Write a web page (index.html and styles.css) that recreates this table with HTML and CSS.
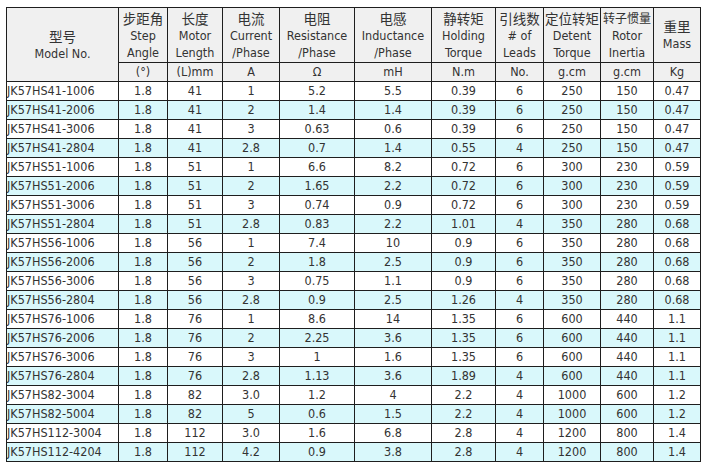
FILE: index.html
```
<!DOCTYPE html>
<html>
<head>
<meta charset="utf-8">
<link rel="stylesheet" href="styles.css">
</head>
<body>
<table class="spec">
<colgroup>
<col class="c-model"><col class="c-step"><col class="c-len"><col class="c-cur"><col class="c-res"><col class="c-ind"><col class="c-hold"><col class="c-leads"><col class="c-det"><col class="c-rot"><col class="c-mass">
</colgroup>
<thead>
<tr class="h1">
<th rowspan="2"><span class="zh">型号</span>Model No.</th>
<th><span class="zh">步距角</span>Step<br>Angle</th>
<th><span class="zh">长度</span>Motor<br>Length</th>
<th><span class="zh">电流</span>Current<br>/Phase</th>
<th><span class="zh">电阻</span>Resistance<br>/Phase</th>
<th><span class="zh">电感</span>Inductance<br>/Phase</th>
<th><span class="zh">静转矩</span>Holding<br>Torque</th>
<th><span class="zh">引线数</span># of<br>Leads</th>
<th><span class="zh">定位转矩</span>Detent<br>Torque</th>
<th><span class="zh narrow">转子惯量</span>Rotor<br>Inertia</th>
<th><span class="zh">重里</span>Mass</th>
</tr>
<tr class="h2">
<th>(°)</th><th>(L)mm</th><th>A</th><th>Ω</th><th>mH</th><th>N.m</th><th>No.</th><th>g.cm</th><th>g.cm</th><th>Kg</th>
</tr>
</thead>
<tbody>
<tr><td class="m">JK57HS41-1006</td><td>1.8</td><td>41</td><td>1</td><td>5.2</td><td>5.5</td><td>0.39</td><td>6</td><td>250</td><td>150</td><td>0.47</td></tr>
<tr class="alt"><td class="m">JK57HS41-2006</td><td>1.8</td><td>41</td><td>2</td><td>1.4</td><td>1.4</td><td>0.39</td><td>6</td><td>250</td><td>150</td><td>0.47</td></tr>
<tr><td class="m">JK57HS41-3006</td><td>1.8</td><td>41</td><td>3</td><td>0.63</td><td>0.6</td><td>0.39</td><td>6</td><td>250</td><td>150</td><td>0.47</td></tr>
<tr class="alt"><td class="m">JK57HS41-2804</td><td>1.8</td><td>41</td><td>2.8</td><td>0.7</td><td>1.4</td><td>0.55</td><td>4</td><td>250</td><td>150</td><td>0.47</td></tr>
<tr><td class="m">JK57HS51-1006</td><td>1.8</td><td>51</td><td>1</td><td>6.6</td><td>8.2</td><td>0.72</td><td>6</td><td>300</td><td>230</td><td>0.59</td></tr>
<tr class="alt"><td class="m">JK57HS51-2006</td><td>1.8</td><td>51</td><td>2</td><td>1.65</td><td>2.2</td><td>0.72</td><td>6</td><td>300</td><td>230</td><td>0.59</td></tr>
<tr><td class="m">JK57HS51-3006</td><td>1.8</td><td>51</td><td>3</td><td>0.74</td><td>0.9</td><td>0.72</td><td>6</td><td>300</td><td>230</td><td>0.59</td></tr>
<tr class="alt"><td class="m">JK57HS51-2804</td><td>1.8</td><td>51</td><td>2.8</td><td>0.83</td><td>2.2</td><td>1.01</td><td>4</td><td>350</td><td>280</td><td>0.68</td></tr>
<tr><td class="m">JK57HS56-1006</td><td>1.8</td><td>56</td><td>1</td><td>7.4</td><td>10</td><td>0.9</td><td>6</td><td>350</td><td>280</td><td>0.68</td></tr>
<tr class="alt"><td class="m">JK57HS56-2006</td><td>1.8</td><td>56</td><td>2</td><td>1.8</td><td>2.5</td><td>0.9</td><td>6</td><td>350</td><td>280</td><td>0.68</td></tr>
<tr><td class="m">JK57HS56-3006</td><td>1.8</td><td>56</td><td>3</td><td>0.75</td><td>1.1</td><td>0.9</td><td>6</td><td>350</td><td>280</td><td>0.68</td></tr>
<tr class="alt"><td class="m">JK57HS56-2804</td><td>1.8</td><td>56</td><td>2.8</td><td>0.9</td><td>2.5</td><td>1.26</td><td>4</td><td>350</td><td>280</td><td>0.68</td></tr>
<tr><td class="m">JK57HS76-1006</td><td>1.8</td><td>76</td><td>1</td><td>8.6</td><td>14</td><td>1.35</td><td>6</td><td>600</td><td>440</td><td>1.1</td></tr>
<tr class="alt"><td class="m">JK57HS76-2006</td><td>1.8</td><td>76</td><td>2</td><td>2.25</td><td>3.6</td><td>1.35</td><td>6</td><td>600</td><td>440</td><td>1.1</td></tr>
<tr><td class="m">JK57HS76-3006</td><td>1.8</td><td>76</td><td>3</td><td>1</td><td>1.6</td><td>1.35</td><td>6</td><td>600</td><td>440</td><td>1.1</td></tr>
<tr class="alt"><td class="m">JK57HS76-2804</td><td>1.8</td><td>76</td><td>2.8</td><td>1.13</td><td>3.6</td><td>1.89</td><td>4</td><td>600</td><td>440</td><td>1.1</td></tr>
<tr><td class="m">JK57HS82-3004</td><td>1.8</td><td>82</td><td>3.0</td><td>1.2</td><td>4</td><td>2.2</td><td>4</td><td>1000</td><td>600</td><td>1.2</td></tr>
<tr class="alt"><td class="m">JK57HS82-5004</td><td>1.8</td><td>82</td><td>5</td><td>0.6</td><td>1.5</td><td>2.2</td><td>4</td><td>1000</td><td>600</td><td>1.2</td></tr>
<tr><td class="m">JK57HS112-3004</td><td>1.8</td><td>112</td><td>3.0</td><td>1.6</td><td>6.8</td><td>2.8</td><td>4</td><td>1200</td><td>800</td><td>1.4</td></tr>
<tr class="alt"><td class="m">JK57HS112-4204</td><td>1.8</td><td>112</td><td>4.2</td><td>0.9</td><td>3.8</td><td>2.8</td><td>4</td><td>1200</td><td>800</td><td>1.4</td></tr>
</tbody>
</table>
</body>
</html>
```
FILE: styles.css
```
html, body {
  margin: 0;
  padding: 0;
  background: #ffffff;
}
body {
  padding: 7px 0 0 6px;
  font-family: "DejaVu Sans Condensed", "DejaVu Sans", "Noto Sans CJK SC", sans-serif;
  font-size: 12.5px;
  color: #333333;
}
.spec {
  border-collapse: collapse;
  table-layout: fixed;
  width: 695px;
}
.c-model { width: 112px; }
.c-step { width: 49px; }
.c-len { width: 55px; }
.c-cur { width: 57px; }
.c-res { width: 75px; }
.c-ind { width: 77px; }
.c-hold { width: 64px; }
.c-leads { width: 48px; }
.c-det { width: 57px; }
.c-rot { width: 53px; }
.c-mass { width: 47px; }
.spec th, .spec td {
  border: 1px solid #1e1e1e;
  padding: 0;
  text-align: center;
  white-space: nowrap;
  overflow: hidden;
}
.spec th {
  font-weight: normal;
  background: #f0f0f0;
  line-height: 17.5px;
}
.zh {
  display: block;
  font-family: "Noto Sans CJK SC", sans-serif;
  font-size: 13.5px;
  line-height: 18px;
}
.zh.narrow {
  font-size: 12px;
}
.h1 th { height: 54px; }
.h2 th { height: 18px; line-height: 18px; }
.spec td {
  height: 18px;
  line-height: 18px;
}
.spec td.m {
  text-align: left;
  padding-left: 0;
}
.alt td { background: #d9f8fb; }
```
